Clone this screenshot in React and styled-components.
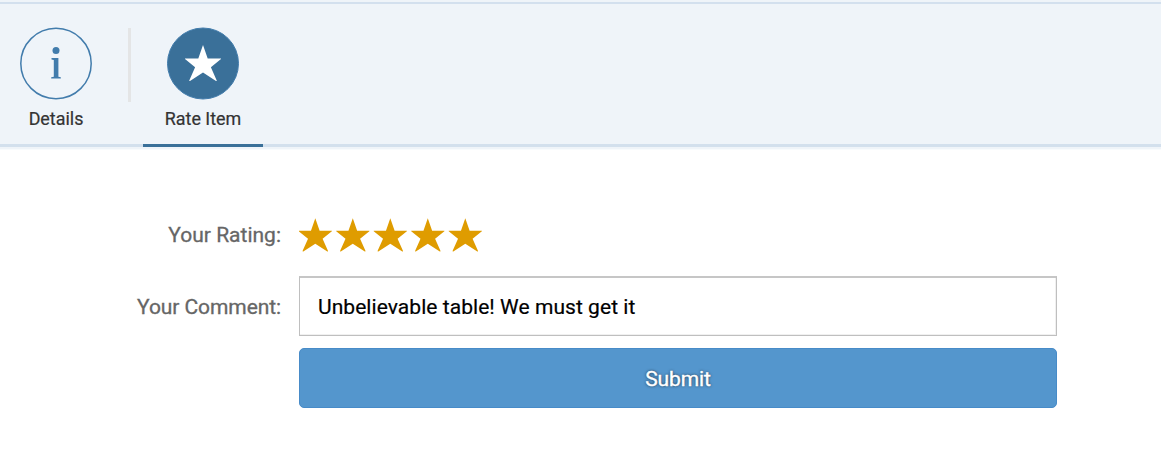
import React from "react";
import styled, { createGlobalStyle } from "styled-components";

const GlobalStyle = createGlobalStyle`
  * { box-sizing: border-box; }
  body { margin: 0; background: #fff; font-family: Roboto, "Liberation Sans", sans-serif; }
`;

const Page = styled.main`
  width: 1161px;
  height: 458px;
  overflow: hidden;
`;

const TopStrip = styled.div`
  display: flow-root;
  background: #eff4f9;
`;

const TabBar = styled.nav`
  display: flex;
  height: 148px;
  margin-top: 2px;
  border-top: 2px solid #d3e0ee;
  background: #eff4f9;
  box-shadow: inset 0 -1px #f8fbfd, inset 0 -3px #eff4f9, inset 0 -6px #d3e0ed;
`;

const Tab = styled.a`
  display: flex;
  flex-direction: column;
  align-items: center;
  width: ${(p) => p.$width}px;
  height: 143px;
  padding-top: 23px;
  border-bottom: 3px solid ${(p) => (p.$selected ? "#3a7099" : "transparent")};
`;

const TabLabel = styled.span`
  margin-top: 8px;
  color: #333;
  font-size: 17.9px;
  line-height: 22px;
  white-space: nowrap;
  -webkit-text-stroke: 0.2px currentColor;
`;

const Separator = styled.span`
  width: 3px;
  height: 74px;
  margin: 24px 12px 0 16px;
  background: #e4e5e6;
`;

const Form = styled.form`
  display: grid;
  grid-template-columns: 281px 758px;
  grid-template-rows: 60px 60px 60px;
  column-gap: 18px;
  row-gap: 12px;
  padding-top: 54px;
`;

const Label = styled.label`
  align-self: center;
  justify-self: end;
  padding-top: 2px;
  color: #666;
  font-size: 21px;
  line-height: 26px;
  letter-spacing: ${(p) => p.$tracking || 0}px;
  white-space: nowrap;
  -webkit-text-stroke: 0.3px currentColor;
`;

const Stars = styled.svg`
  display: block;
  align-self: center;
  margin-top: 1px;
`;

const CommentField = styled.input`
  width: 758px;
  height: 60px;
  padding: 0 18px;
  border: 1px solid #bfbfbf;
  border-top: 2px solid #c6c6c6;
  border-radius: 0;
  outline: none;
  background: #fff;
  box-shadow: inset -1px -1px #f0f0f0;
  color: #000;
  font: 21px Roboto, "Liberation Sans", sans-serif;
  letter-spacing: 0.055px;
  -webkit-text-stroke: 0.2px currentColor;
`;

const SubmitButton = styled.button`
  grid-column: 2;
  height: 60px;
  padding: 1px 0 0;
  border: 1px solid #478bc8;
  border-radius: 5px;
  background: #5496cd;
  color: #fff;
  font: 21px Roboto, "Liberation Sans", sans-serif;
  letter-spacing: -0.1px;
  text-shadow: 0 0 3px rgba(0, 0, 0, 0.75);
  -webkit-text-stroke: 0.4px currentColor;
`;

const STAR = "M18 0 22.7 13.5H36V14.1L25.9 22.2 31.7 35.4V36H31L18 27.6 5 36H4.3V35.4L10.1 22.2 0 14.1V13.5H13.3Z";

function RatingStars({ count }) {
  return (
    <Stars width="184" height="34" viewBox="0 0 184 34" fill="#df9c00" role="img" aria-label={`${count} stars`}>
      {Array.from({ length: count }, (_, i) => (
        <path key={i} d={STAR} transform={`translate(${-0.3 + i * 37.5} 0.2) scale(0.922)`} />
      ))}
    </Stars>
  );
}

function RateIcon() {
  return (
    <svg width="72" height="73" viewBox="0 0 72 73" aria-hidden="true">
      <circle cx="36" cy="36.5" r="35.5" fill="#3a7099" stroke="#427cac" />
      <path d={STAR} fill="#fff" transform="translate(18 18)" />
    </svg>
  );
}

function InfoIcon() {
  return (
    <svg width="72" height="73" viewBox="0 0 72 73" aria-hidden="true">
      <circle cx="36" cy="36.5" r="35.2" fill="none" stroke="#427cac" strokeWidth="1.5" />
      <circle cx="36" cy="23.4" r="3.5" fill="#427cac" />
      <path d="M31.5 31H38.4V49.7L40.8 50.2V51.6H31.2V50.2L33.8 49.7V32.9L31.5 32.5Z" fill="#427cac" />
    </svg>
  );
}

export default function App() {
  return (
    <>
      <GlobalStyle />
      <Page>
        <TopStrip>
          <TabBar>
            <Tab $width={112}>
              <InfoIcon />
              <TabLabel>Details</TabLabel>
            </Tab>
            <Separator />
            <Tab $width={120} $selected>
              <RateIcon />
              <TabLabel>Rate Item</TabLabel>
            </Tab>
          </TabBar>
        </TopStrip>
        <Form onSubmit={(e) => e.preventDefault()}>
          <Label>Your Rating:</Label>
          <RatingStars count={5} />
          <Label htmlFor="comment" $tracking={-0.08}>Your Comment:</Label>
          <CommentField id="comment" defaultValue="Unbelievable table! We must get it" />
          <SubmitButton>Submit</SubmitButton>
        </Form>
      </Page>
    </>
  );
}
